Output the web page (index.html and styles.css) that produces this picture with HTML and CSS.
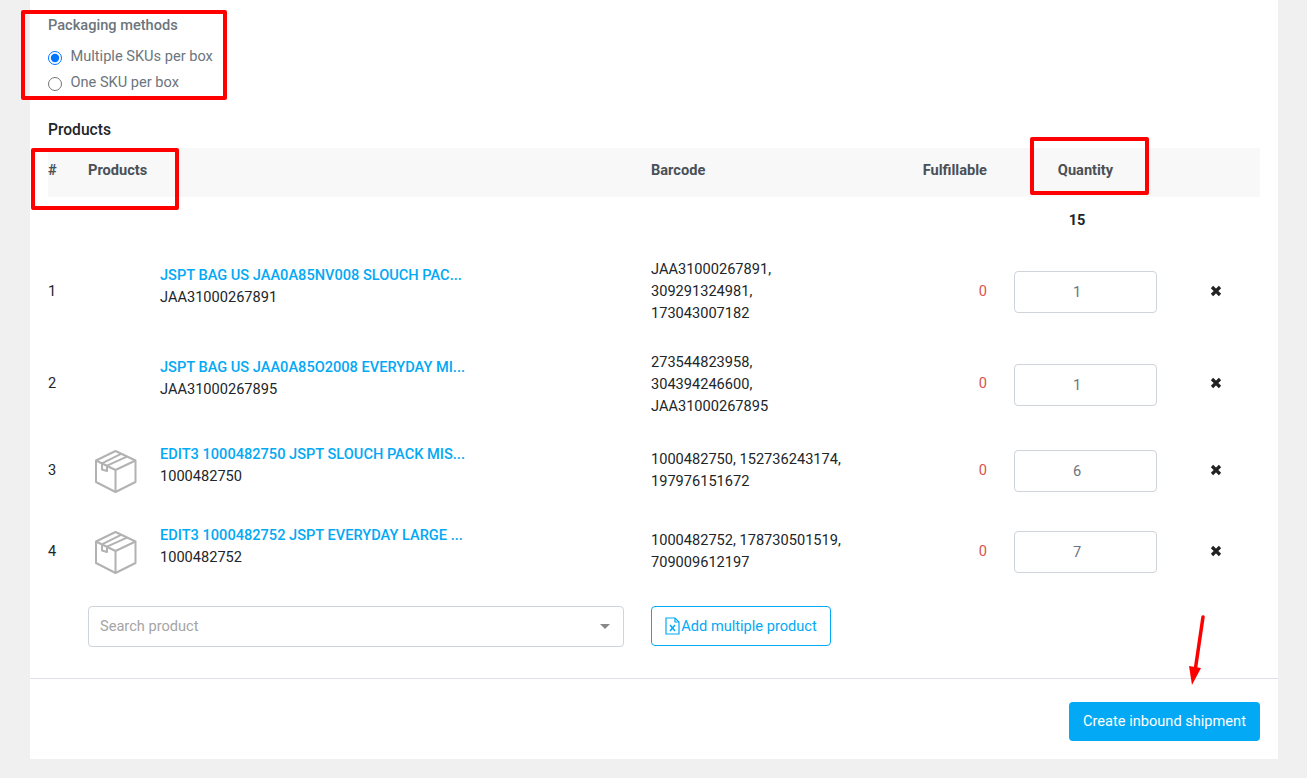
FILE: index.html
```html
<!DOCTYPE html>
<html lang="en">
<head>
<meta charset="utf-8">
<title>Create inbound shipment</title>
<link rel="stylesheet" href="styles.css">
</head>
<body>
<main class="card">
  <section class="packaging">
    <h2 class="packaging-title">Packaging methods</h2>
    <label class="radio-row"><input type="radio" name="pack" class="radio" checked><span>Multiple SKUs per box</span></label>
    <label class="radio-row"><input type="radio" name="pack" class="radio"><span>One SKU per box</span></label>
  </section>
  <h2 class="products-title">Products</h2>
  <div class="table">
    <div class="row head">
      <div>#</div><div>Products</div><div>Barcode</div><div class="right">Fulfillable</div><div class="qty-head">Quantity</div><div></div>
    </div>
    <div class="row total">
      <div></div><div></div><div></div><div></div><div class="total-value">15</div><div></div>
    </div>
    <div class="row item tall-a">
      <div>1</div>
      <div class="product"><div class="thumb"></div><div class="product-text"><a class="name">JSPT BAG US JAA0A85NV008 SLOUCH PAC...</a><div>JAA31000267891</div></div></div>
      <div>JAA31000267891,<br>309291324981,<br>173043007182</div>
      <div class="right zero">0</div>
      <div class="qty-cell"><input class="qty" value="1"></div>
      <div class="remove"><svg viewBox="0 0 12 12" width="12" height="12"><path d="M2 2l8 8M10 2l-8 8" stroke="#222" stroke-width="3.200"/></svg></div>
    </div>
    <div class="row item tall-b">
      <div>2</div>
      <div class="product"><div class="thumb"></div><div class="product-text"><a class="name">JSPT BAG US JAA0A85O2008 EVERYDAY MI...</a><div>JAA31000267895</div></div></div>
      <div class="codes">273544823958,<br>304394246600,<br>JAA31000267895</div>
      <div class="right zero">0</div>
      <div class="qty-cell"><input class="qty" value="1"></div>
      <div class="remove"><svg viewBox="0 0 12 12" width="12" height="12"><path d="M2 2l8 8M10 2l-8 8" stroke="#222" stroke-width="3.200"/></svg></div>
    </div>
    <div class="row item short">
      <div>3</div>
      <div class="product">
        <div class="thumb"><svg class="box" viewBox="0 0 44 44" width="44" height="44"><g fill="none" stroke="#b2b2b2" stroke-width="2" stroke-linejoin="round"><path d="M21.500 1L41.500 10.500V32L21.500 42L2 32V10.500Z"/><path d="M2 10.500L21.500 20L41.500 10.500M21.500 20V42"/><path d="M27 3.800L8 13.300V19.500L13 21V15.700L33 6.700"/></g></svg></div>
        <div class="product-text"><a class="name">EDIT3 1000482750 JSPT SLOUCH PACK MIS...</a><div>1000482750</div></div>
      </div>
      <div>1000482750, 152736243174,<br>197976151672</div>
      <div class="right zero">0</div>
      <div class="qty-cell"><input class="qty" value="6"></div>
      <div class="remove"><svg viewBox="0 0 12 12" width="12" height="12"><path d="M2 2l8 8M10 2l-8 8" stroke="#222" stroke-width="3.200"/></svg></div>
    </div>
    <div class="row item short">
      <div>4</div>
      <div class="product">
        <div class="thumb"><svg class="box" viewBox="0 0 44 44" width="44" height="44"><g fill="none" stroke="#b2b2b2" stroke-width="2" stroke-linejoin="round"><path d="M21.500 1L41.500 10.500V32L21.500 42L2 32V10.500Z"/><path d="M2 10.500L21.500 20L41.500 10.500M21.500 20V42"/><path d="M27 3.800L8 13.300V19.500L13 21V15.700L33 6.700"/></g></svg></div>
        <div class="product-text"><a class="name">EDIT3 1000482752 JSPT EVERYDAY LARGE ...</a><div>1000482752</div></div>
      </div>
      <div>1000482752, 178730501519,<br>709009612197</div>
      <div class="right zero">0</div>
      <div class="qty-cell"><input class="qty" value="7"></div>
      <div class="remove"><svg viewBox="0 0 12 12" width="12" height="12"><path d="M2 2l8 8M10 2l-8 8" stroke="#222" stroke-width="3.200"/></svg></div>
    </div>
  </div>
  <div class="add-row">
    <div class="select"><span class="placeholder">Search product</span><i class="caret"></i></div>
    <button class="add-btn"><svg viewBox="0 0 15 18" width="15" height="18"><g fill="none" stroke="#03a9f4" stroke-width="1.200"><path d="M1 1H10L14 5V17H1Z"/><path d="M10 1V5H14"/><path d="M5 8L10 14M10 8L5 14" stroke-width="1.500"/></g></svg><span>Add multiple product</span></button>
  </div>
  <footer class="footer"><button class="create-btn">Create inbound shipment</button></footer>
</main>
<div class="mark mark-pack"></div>
<div class="mark mark-products"></div>
<div class="mark mark-qty"></div>
<svg class="arrow" viewBox="0 0 20 72" width="20" height="72"><path d="M16 3L8.500 54" stroke="#f00" stroke-width="3.500" stroke-linecap="round" fill="none"/><path d="M2 52L14 54L5 71Z" fill="#f00"/></svg>
</body>
</html>
```
FILE: styles.css
```css
* { box-sizing: border-box; }
html, body { margin: 0; height: 100%; }
body {
  background: #f0f0f0;
  font-family: Roboto, "Liberation Sans", sans-serif;
  font-size: 14.6px;
  line-height: 22px;
  color: #212529;
  overflow: hidden;
}
.card {
  margin-left: 30px;
  width: 1248px;
  height: 759px;
  background: #fff;
  display: flex;
  flex-direction: column;
}
.packaging { padding: 14px 18px 0; height: 118px; }
.packaging-title {
  margin: 0 0 8px;
  font-size: 14.6px;
  font-weight: 500;
  color: #6c757d;
  line-height: 22px;
}
.radio-row {
  display: flex;
  align-items: center;
  gap: 8.5px;
  height: 26px;
  color: #6c757d;
}
.radio { margin: 1px 0 0; width: 14px; height: 14px; accent-color: #0075ff; flex: none; }
.radio-row span { margin-top: -3px; }
.products-title {
  margin: 0;
  padding: 1px 18px 0;
  height: 30px;
  line-height: 22px;
  font-size: 15.6px;
  font-weight: 500;
  color: #212529;
}
.table { margin: 0 18px; }
.row {
  display: grid;
  grid-template-columns: 40px 563px 200px 136px 185px 88px;
  align-items: center;
}
.head {
  height: 49px;
  padding-bottom: 6px;
  background: #f8f8f8;
  font-weight: 700;
  color: #495057;
}
.right { text-align: right; }
.qty-head { padding-left: 27px; width: 170px; text-align: center; }
.total { height: 49px; padding-bottom: 4px; font-weight: 700; }
.total-value { padding-left: 27px; width: 153px; text-align: center; }
.item { height: 81px; padding-bottom: 2px; }
.tall-a { height: 92.5px; }
.tall-b { height: 91.5px; }
.codes { margin-top: 1px; }
.product { display: flex; align-items: center; }
.short .product { margin-top: 2px; }
.thumb { width: 72px; height: 44px; flex: none; padding: 1px 0 0 6px; }
.box { display: block; }
.product-text { padding-bottom: 11px; }
.name {
  display: block;
  color: #03a9f4;
  font-weight: 500;
}
.zero { color: #d9534f; }
.qty-cell { padding: 2px 0 0 27px; }
.tall-b .qty-cell { padding-top: 3px; }
.qty {
  display: block;
  width: 143px;
  height: 42px;
  border: 1px solid #ced4da;
  border-radius: 4px;
  text-align: center;
  font: 14.6px Roboto, "Liberation Sans", sans-serif;
  color: #6c757d;
  background: #fff;
  padding: 0 17px 0 0;
}
.remove { display: flex; justify-content: center; }
.add-row {
  display: flex;
  align-items: flex-start;
  margin-top: 14px;
  padding-left: 58px;
  height: 72px;
}
.select {
  width: 536px;
  height: 41px;
  border: 1px solid #ced4da;
  border-radius: 4px;
  display: flex;
  align-items: center;
  justify-content: space-between;
  padding: 0 13px 0 11px;
  color: #a5a5a5;
}
.placeholder { margin-top: -2px; }
.caret {
  width: 0; height: 0;
  border-left: 5px solid transparent;
  border-right: 5px solid transparent;
  border-top: 5px solid #888;
}
.add-btn {
  margin-left: 27px;
  width: 180px;
  height: 40px;
  border: 1px solid #03a9f4;
  border-radius: 4px;
  background: #fff;
  color: #03a9f4;
  font: 14.6px/22px Roboto, "Liberation Sans", sans-serif;
  display: flex;
  align-items: center;
  justify-content: center;
  gap: 1px;
  padding: 0;
}
.footer {
  border-top: 1px solid #e0e0e6;
  display: flex;
  justify-content: flex-end;
  padding: 23px 18px 0;
  flex: 1;
}
.create-btn {
  width: 191px;
  height: 39px;
  border: 0;
  border-radius: 4px;
  background: #03a9f4;
  color: #fff;
  font: 400 14.6px Roboto, "Liberation Sans", sans-serif;
  padding: 0 0 2px;
}
.mark { position: absolute; border: 4px solid #f00; border-radius: 2px; }
.mark-pack { left: 21px; top: 10px; width: 206px; height: 90px; }
.mark-products { left: 31px; top: 148px; width: 148px; height: 62px; }
.mark-qty { left: 1030px; top: 137px; width: 119px; height: 58px; }
.arrow { position: absolute; left: 1187px; top: 614px; }
```
